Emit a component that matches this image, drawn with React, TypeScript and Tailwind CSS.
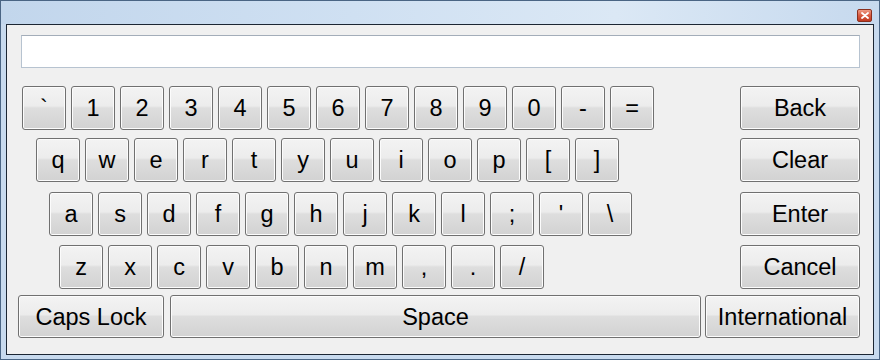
import React from "react";

const btn =
  "flex items-center justify-center rounded-[3px] border border-[#707070] shadow-[inset_0_0_0_1px_#fcfcfc] bg-[linear-gradient(#f3f3f3_0%,#ececec_45%,#dedede_50%,#d2d2d2_100%)] text-black text-[23.5px] leading-none h-full";

function Key({ label, w = 44 }: { label: string; w?: number }) {
  return (
    <div className={btn} style={{ width: w }}>
      <span className="translate-y-[1px]">{label}</span>
    </div>
  );
}

function Row({ keys, ml, right }: { keys: string[]; ml: string; right?: string }) {
  return (
    <div className="flex h-[44px] justify-between">
      <div className={`flex gap-[5px] h-full ${ml}`}>
        {keys.map((k, i) => (
          <Key key={i} label={k} />
        ))}
      </div>
      {right && <Key label={right} w={120} />}
    </div>
  );
}

export default function App() {
  return (
    <div className="w-[880px] h-[360px] border border-[#4a6584] bg-[#c8daee] flex flex-col font-['Liberation_Sans',Arial,sans-serif] overflow-hidden">
      <div className="h-[23px] flex justify-end items-start pt-[8px] pr-[7px] bg-[linear-gradient(to_right,#c2d6ec_0%,#cfe0f2_40%,#dbe8f5_70%,#c6d9ee_100%)]">
        <div className="w-[15px] h-[13px] rounded-[2px] border border-[#8a2f1e] bg-[linear-gradient(#ee9a84_0%,#d85a40_50%,#c03a22_100%)] flex items-center justify-center">
          <svg width="8" height="7" viewBox="0 0 8 7">
            <path d="M1 1 L7 6 M7 1 L1 6" stroke="#ffffff" strokeWidth="1.8" strokeLinecap="round" />
          </svg>
        </div>
      </div>
      <div className="flex-1 px-[5px] pb-[4px] flex">
        <div className="flex-1 border border-[#1c2633] bg-[#f0f0f0] pl-[11px] pr-[13px] pt-[10px] flex flex-col">
          <div className="ml-[3px] h-[33px] bg-white border border-[#b7c3d0] border-t-[#a3adb9]" />
          <div className="mt-[18px]">
            <Row keys={["`", "1", "2", "3", "4", "5", "6", "7", "8", "9", "0", "-", "="]} ml="ml-[4px]" right="Back" />
          </div>
          <div className="mt-[8px]">
            <Row keys={["q", "w", "e", "r", "t", "y", "u", "i", "o", "p", "[", "]"]} ml="ml-[18px]" right="Clear" />
          </div>
          <div className="mt-[10px]">
            <Row keys={["a", "s", "d", "f", "g", "h", "j", "k", "l", ";", "'", "\\"]} ml="ml-[31px]" right="Enter" />
          </div>
          <div className="mt-[9px]">
            <Row keys={["z", "x", "c", "v", "b", "n", "m", ",", ".", "/"]} ml="ml-[41px]" right="Cancel" />
          </div>
          <div className="mt-[6px] flex h-[43px]">
            <Key label="Caps Lock" w={146} />
            <div className="ml-[6px]">
              <Key label="Space" w={531} />
            </div>
            <div className="ml-[4px]">
              <Key label="International" w={155} />
            </div>
          </div>
        </div>
      </div>
    </div>
  );
}
